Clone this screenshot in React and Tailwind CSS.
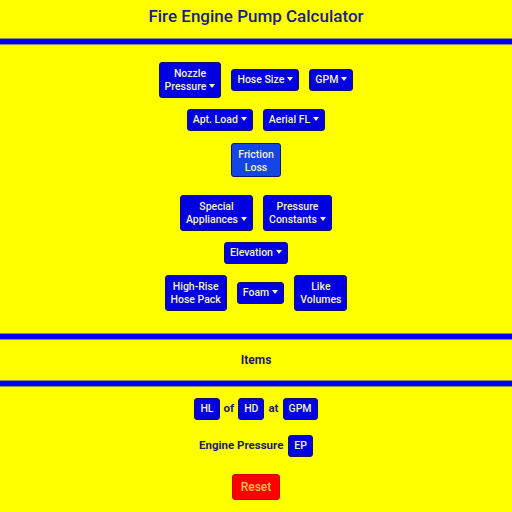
import React from "react";

const Caret = () => (
  <span className="inline-block ml-[3px] align-middle border-x-[3.5px] border-x-transparent border-t-[4px] border-t-current relative top-[-1px]"></span>
);

function Btn({ children, drop, light, two, className = "" }) {
  return (
    <button
      className={
        "whitespace-nowrap rounded-[3px] border border-[#101070] px-[5px] text-[10.5px] font-medium text-[#f3f3b8] " +
        (two ? "py-[4px] leading-[13px] " : "py-[3px] leading-[14px] ") +
        (light ? "bg-[#1446e6] " : "bg-[#0000e0] ") +
        className
      }
    >
      {children}
      {drop && <Caret />}
    </button>
  );
}

function Bar() {
  return <div className="h-[7px] border-y border-[#8a8a7a] bg-[#0000ee]"></div>;
}

export default function App() {
  return (
    <div className="w-[512px] h-[512px] bg-[#ffff00] overflow-hidden" style={{ fontFamily: "Roboto, 'Liberation Sans', sans-serif" }}>
      <h1 className="pt-[5px] h-[38px] text-center text-[17px] leading-[22px] font-medium text-[#1c1c8c]">Fire Engine Pump Calculator</h1>
      <Bar />
      <div className="flex flex-col items-center pt-[17px]">
        <div className="flex items-center gap-[10px] h-[36px]">
          <Btn drop two>Nozzle<br />Pressure</Btn>
          <Btn drop>Hose Size</Btn>
          <Btn drop>GPM</Btn>
        </div>
        <div className="flex items-center gap-[10px] mt-[11px] h-[22px]">
          <Btn drop>Apt. Load</Btn>
          <Btn drop>Aerial FL</Btn>
        </div>
        <div className="mt-[12px] flex h-[34px]">
          <Btn light two className="px-[6px] py-[3px]">Friction<br />Loss</Btn>
        </div>
        <div className="flex items-center gap-[10px] mt-[18px] h-[36px]">
          <Btn drop two>Special<br />Appliances</Btn>
          <Btn drop two>Pressure<br />Constants</Btn>
        </div>
        <div className="mt-[11px] flex h-[22px]">
          <Btn drop>Elevation</Btn>
        </div>
        <div className="flex items-center gap-[10px] mt-[11px] h-[36px]">
          <Btn two>High-Rise<br />Hose Pack</Btn>
          <Btn drop>Foam</Btn>
          <Btn two>Like<br />Volumes</Btn>
        </div>
      </div>
      <div className="mt-[22px]"><Bar /></div>
      <div className="h-[40px] flex items-center justify-center text-[12px] font-bold text-[#1c1c6c]">Items</div>
      <Bar />
      <div className="flex flex-col items-center pt-[12px] text-[11.5px] font-bold text-[#1c1c6c]">
        <div className="flex items-center gap-[4px] h-[20px]">
          <Btn className="py-[2px]">HL</Btn>
          <span>of</span>
          <Btn className="py-[2px]">HD</Btn>
          <span>at</span>
          <Btn className="py-[2px]">GPM</Btn>
        </div>
        <div className="flex items-center gap-[5px] mt-[17px] h-[20px]">
          <span>Engine Pressure</span>
          <Btn className="py-[2px]">EP</Btn>
        </div>
        <button className="mt-[18px] h-[26px] rounded-[3px] bg-[#ff0000] border border-[#d00000] px-[8px] text-[12px] leading-[14px] font-medium text-[#ffc040]">Reset</button>
      </div>
    </div>
  );
}
